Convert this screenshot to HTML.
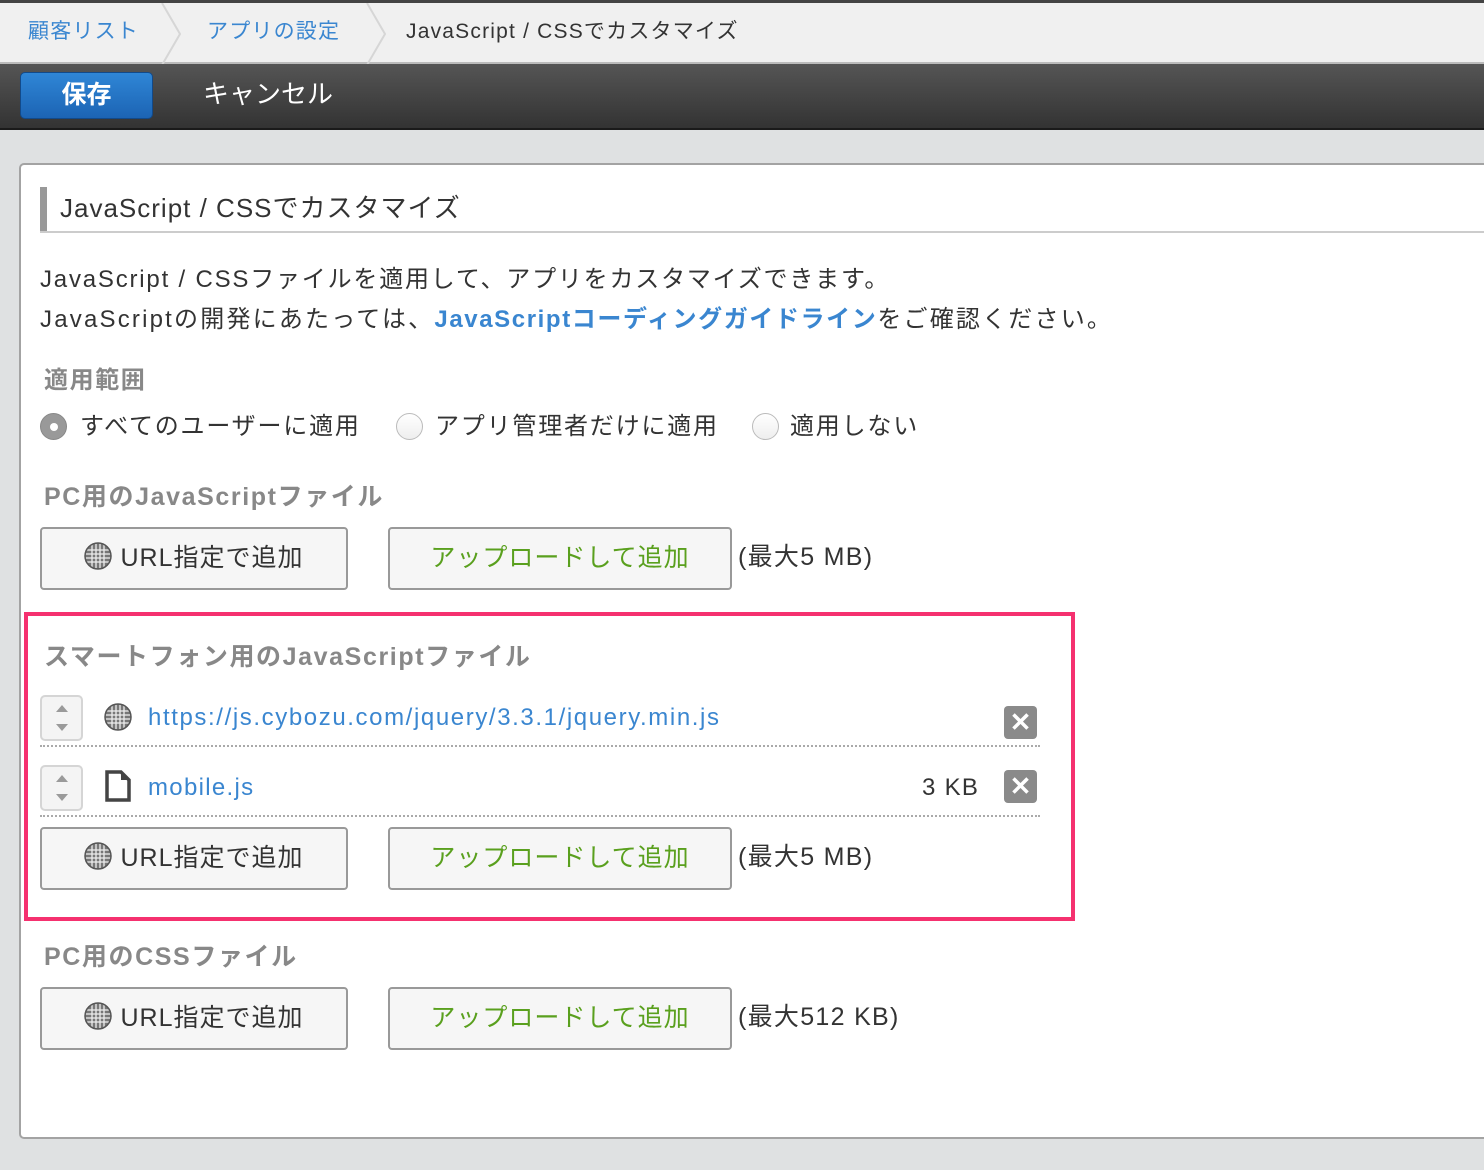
<!DOCTYPE html>
<html><head><meta charset="utf-8">
<style>
*{margin:0;padding:0;box-sizing:border-box}
body{width:1484px;height:1170px;overflow:hidden;background:#dfe1e2;font-family:"Liberation Sans","Noto Sans CJK JP",sans-serif;color:#333;position:relative}
.a{position:absolute;white-space:nowrap}
.bc{left:0;top:0;width:1484px;height:64px;background:#f0f0f0;border-top:3px solid #444;border-bottom:2px solid #bbb}
.bc span{position:absolute;top:14px;font-size:21px;line-height:30px;letter-spacing:1.2px}
.tb{left:0;top:64px;width:1484px;height:66px;background:linear-gradient(#555,#333);border-bottom:2px solid #1a1a1a}
.save{left:20px;top:72px;width:133px;height:47px;border-radius:5px;background:linear-gradient(#2f86d6,#1c64b4);border:1px solid #124a8a;color:#fff;font-size:25px;font-weight:bold;text-align:center;line-height:44px}
.panel{left:19px;top:163px;width:1480px;height:976px;background:#fff;border:2px solid #a3a3a3;border-radius:5px}
.lbl{color:#888;font-weight:bold;font-size:25px;line-height:30px;letter-spacing:1.6px}
.btn{height:63px;border:2px solid #999;border-radius:4px;background:#f6f6f6;font-size:25px;line-height:59px;text-align:center;letter-spacing:1px}
.up{color:#5aa01e}
.gl{display:inline-block;vertical-align:-4px;margin-right:8px}
.spin{width:43px;height:46px;border:2px solid #d5d5d5;border-radius:5px;background:#f4f4f4}
.x{width:33px;height:33px;background:#8a8a8a;border-radius:4px;color:#fff;text-align:center;font-size:26px;line-height:33px;font-weight:bold}
.dot{height:0;border-top:2px dotted #aaa}
.radio{width:27px;height:27px;border-radius:50%;border:1px solid #bbb;background:linear-gradient(#fff,#eee)}
.r{font-size:24px;line-height:32px;letter-spacing:1.8px}
.mb{font-size:25px;line-height:32px;letter-spacing:1.3px}
</style></head><body>
<div class="a bc">
<span style="left:28px;color:#3a86d0">顧客リスト</span>
<svg class="a" style="left:160px;top:0" width="24" height="62"><path d="M2 0 L20 31 L2 62" stroke="#d6d6d6" stroke-width="2" fill="none"/></svg>
<span style="left:207px;color:#3a86d0">アプリの設定</span>
<svg class="a" style="left:365px;top:0" width="24" height="62"><path d="M2 0 L20 31 L2 62" stroke="#d6d6d6" stroke-width="2" fill="none"/></svg>
<span style="left:406px;color:#333">JavaScript / CSSでカスタマイズ</span>
</div>
<div class="a tb"></div>
<div class="a save">保存</div>
<div class="a" style="left:203px;top:78px;color:#fff;font-size:26px;line-height:32px">キャンセル</div>

<div class="a panel"></div>
<div class="a" style="left:40px;top:187px;width:7px;height:46px;background:#999"></div>
<div class="a" style="left:40px;top:231px;width:1444px;height:2px;background:#ccc"></div>
<div class="a" style="left:60px;top:192px;font-size:26px;line-height:32px;letter-spacing:1px">JavaScript / CSSでカスタマイズ</div>

<div class="a" style="left:40px;top:264px;font-size:24px;line-height:32px;letter-spacing:1.8px">JavaScript / CSSファイルを適用して、アプリをカスタマイズできます。</div>
<div class="a" style="left:40px;top:304px;font-size:24px;line-height:32px;letter-spacing:2.2px">JavaScriptの開発にあたっては、<b style="color:#3a86d0;letter-spacing:1.6px">JavaScriptコーディングガイドライン</b>をご確認ください。</div>

<div class="a lbl" style="left:44px;top:366px;font-size:24px">適用範囲</div>
<div class="a radio" style="left:40px;top:413px;background:#999;border-color:#888"><div style="position:absolute;left:9px;top:9px;width:8px;height:8px;border-radius:50%;background:#fff"></div></div>
<div class="a r" style="left:80px;top:411px">すべてのユーザーに適用</div>
<div class="a radio" style="left:396px;top:413px"></div>
<div class="a r" style="left:435px;top:411px">アプリ管理者だけに適用</div>
<div class="a radio" style="left:752px;top:413px"></div>
<div class="a r" style="left:790px;top:411px">適用しない</div>

<svg width="0" height="0" style="position:absolute"><defs>
<symbol id="g" viewBox="0 0 28 28"><circle cx="14" cy="14" r="13" fill="#777"/><g stroke="#eee" stroke-width="1.3"><path d="M1 8H27M1 12H27M1 16H27M1 20H27M8 1V27M12 1V27M16 1V27M20 1V27"/></g><circle cx="14" cy="14" r="13" fill="none" stroke="#555" stroke-width="1.5"/></symbol>
</defs></svg>

<div class="a lbl" style="left:44px;top:482px">PC用のJavaScriptファイル</div>
<div class="a btn" style="left:40px;top:527px;width:308px"><svg class="gl" width="28" height="28"><use href="#g"/></svg>URL指定で追加</div>
<div class="a btn up" style="left:388px;top:527px;width:344px">アップロードして追加</div>
<div class="a mb" style="left:738px;top:541px">(最大5 MB)</div>

<div class="a" style="left:24px;top:612px;width:1051px;height:309px;border:4px solid #f5316f"></div>
<div class="a lbl" style="left:44px;top:642px">スマートフォン用のJavaScriptファイル</div>

<div class="a spin" style="left:40px;top:695px"></div>
<svg class="a" style="left:52px;top:702px" width="20" height="32"><path d="M4 10L10 3L16 10Z M4 22L10 29L16 22Z" fill="#9a9a9a"/></svg>
<svg class="a" style="left:104px;top:703px" width="28" height="28"><use href="#g"/></svg>
<div class="a" style="left:148px;top:702px;font-size:24px;line-height:32px;color:#3a86d0;letter-spacing:1.6px">https://js.cybozu.com/jquery/3.3.1/jquery.min.js</div>
<div class="a x" style="left:1004px;top:706px">✕</div>
<div class="a dot" style="left:40px;top:745px;width:1000px"></div>

<div class="a spin" style="left:40px;top:765px"></div>
<svg class="a" style="left:52px;top:772px" width="20" height="32"><path d="M4 10L10 3L16 10Z M4 22L10 29L16 22Z" fill="#9a9a9a"/></svg>
<svg class="a" style="left:104px;top:770px" width="28" height="32"><path d="M3 2H17L25 10V30H3Z" fill="#fff" stroke="#444" stroke-width="3.5" stroke-linejoin="miter"/><path d="M17 2V10H25" fill="#444"/></svg>
<div class="a" style="left:148px;top:772px;font-size:24px;line-height:32px;color:#3a86d0;letter-spacing:1.3px">mobile.js</div>
<div class="a" style="left:922px;top:772px;font-size:24px;line-height:32px;letter-spacing:1.3px">3 KB</div>
<div class="a x" style="left:1004px;top:770px">✕</div>
<div class="a dot" style="left:40px;top:815px;width:1000px"></div>

<div class="a btn" style="left:40px;top:827px;width:308px"><svg class="gl" width="28" height="28"><use href="#g"/></svg>URL指定で追加</div>
<div class="a btn up" style="left:388px;top:827px;width:344px">アップロードして追加</div>
<div class="a mb" style="left:738px;top:841px">(最大5 MB)</div>

<div class="a lbl" style="left:44px;top:942px">PC用のCSSファイル</div>
<div class="a btn" style="left:40px;top:987px;width:308px"><svg class="gl" width="28" height="28"><use href="#g"/></svg>URL指定で追加</div>
<div class="a btn up" style="left:388px;top:987px;width:344px">アップロードして追加</div>
<div class="a mb" style="left:738px;top:1001px">(最大512 KB)</div>
</body></html>
